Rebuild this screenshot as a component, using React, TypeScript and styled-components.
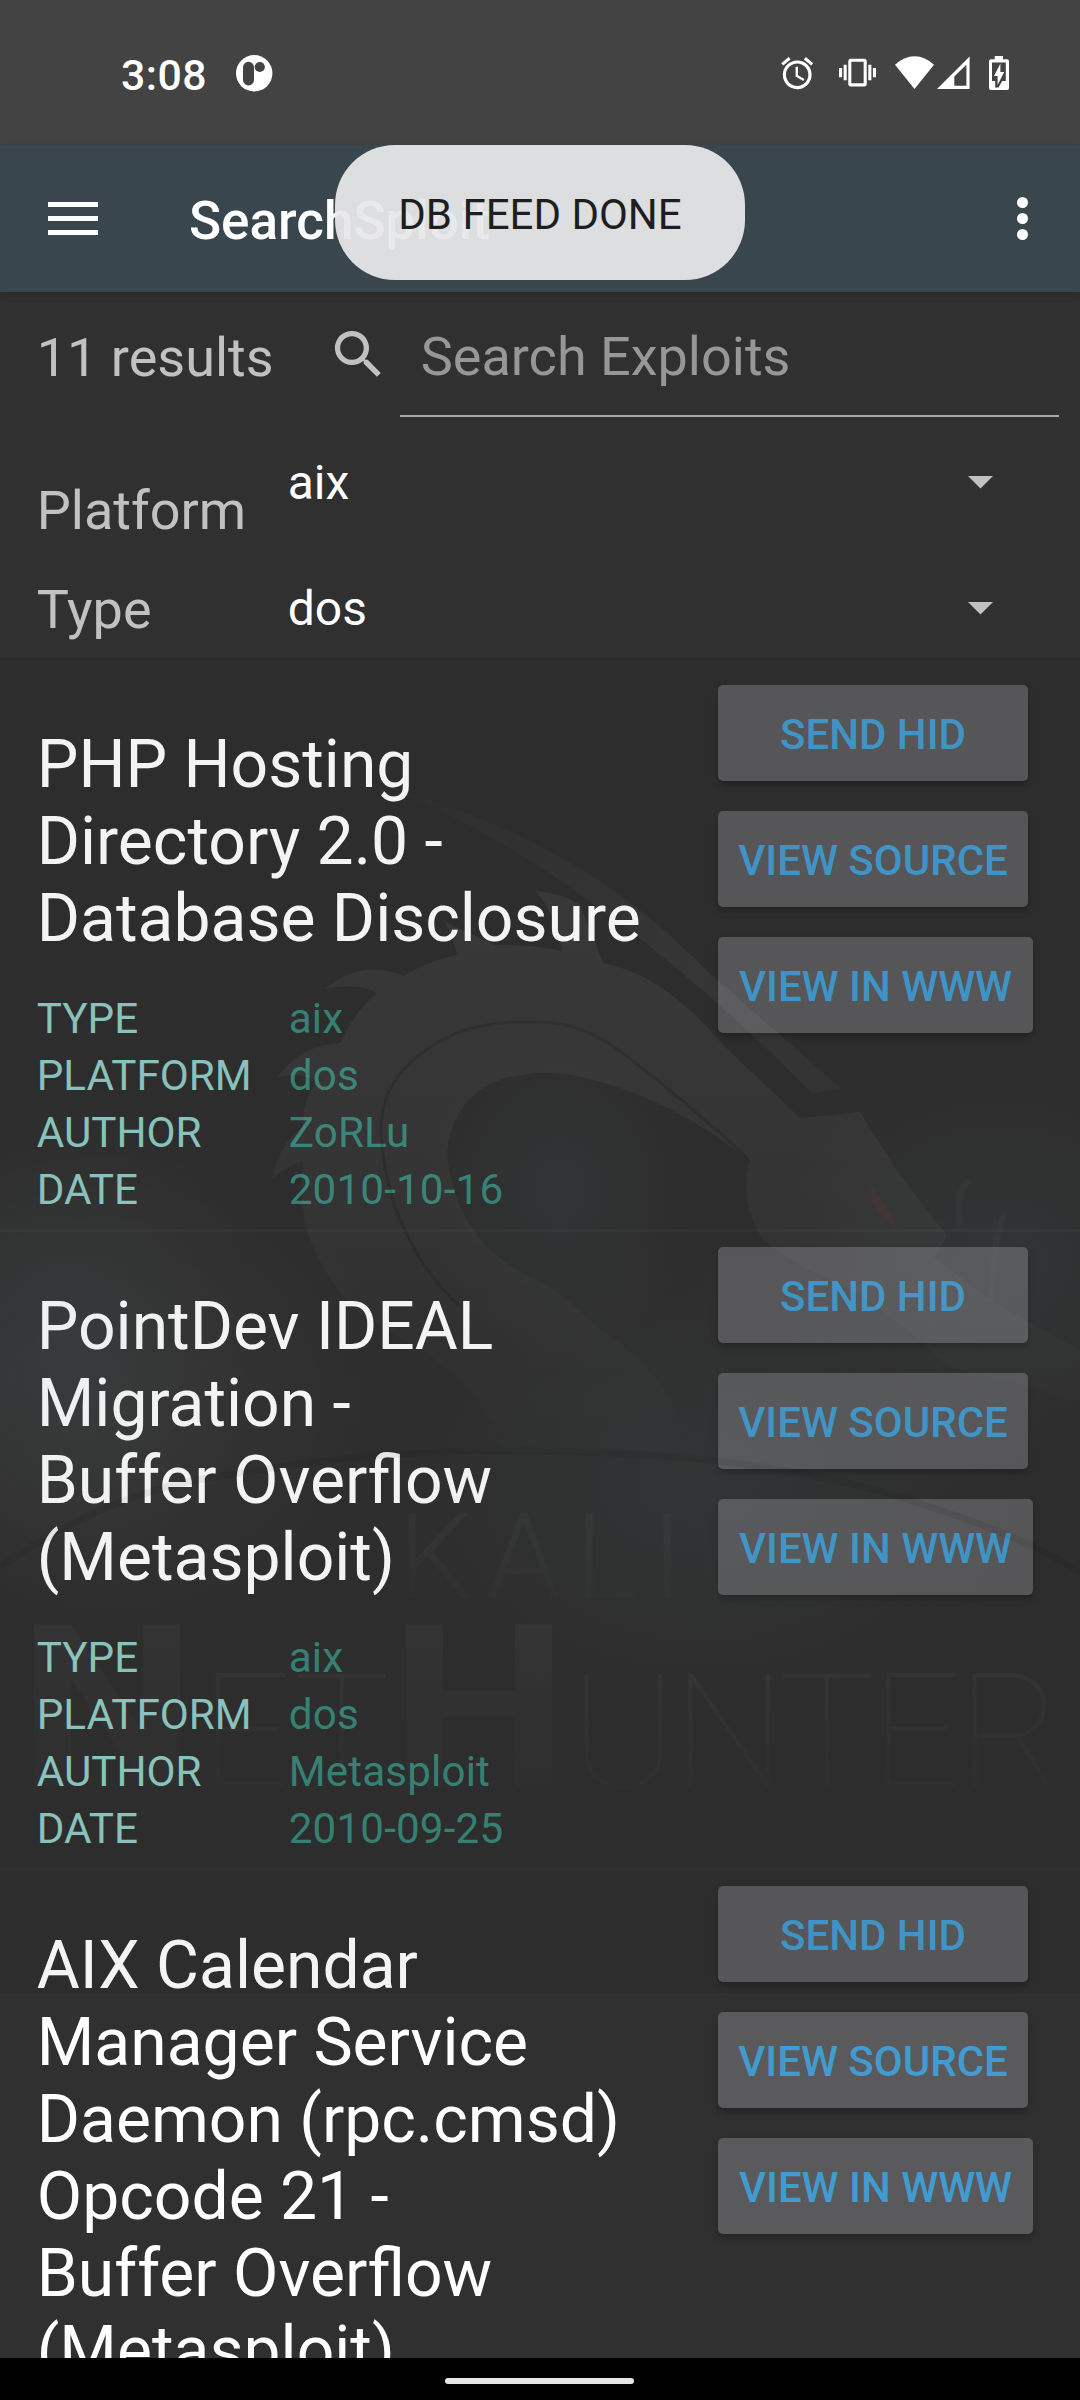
import React from "react";
import styled, { createGlobalStyle } from "styled-components";
import { MdAlarm, MdSearch, MdVibration } from "react-icons/md";

const GlobalStyle = createGlobalStyle`
  *, *::before, *::after { box-sizing: border-box; }
  html, body { margin: 0; padding: 0; background: #303030; }
  body { font-family: Roboto, "Noto Sans", sans-serif; }
`;

const Screen = styled.div`
  position: relative;
  display: flex;
  flex-direction: column;
  width: 1080px;
  height: 2400px;
  overflow: hidden;
  background: #303030;
  color: #fff;
`;

const StatusBar = styled.header`
  flex: none;
  display: flex;
  align-items: flex-start;
  height: 145px;
  padding: 54px 71px 0 121px;
  background: #434343;
`;

const Clock = styled.span`
  width: 115px;
  padding-top: 1px;
  font-size: 42.8px;
  line-height: 40px;
  font-weight: 500;
  letter-spacing: 0.4px;
`;

const StatusIcons = styled.div`
  display: flex;
  align-items: flex-start;
  margin-left: auto;
`;

const IconSlot = styled.span<{ $gap?: number }>`
  display: block;
  margin-left: ${(p) => p.$gap ?? 0}px;
  height: 39px;
  svg { display: block; }
`;

const Toolbar = styled.div`
  flex: none;
  position: relative;
  display: flex;
  align-items: center;
  height: 147px;
  padding: 0 52px 0 48px;
  background: #3a464d;
  box-shadow: 0 2px 8px rgba(0, 0, 0, 0.16);
`;

const MenuButton = styled.button`
  display: flex;
  flex-direction: column;
  gap: 9px;
  width: 50px;
  padding: 0;
  border: 0;
  background: none;
`;

const MenuBar = styled.span`
  height: 5.3px;
  background: #fff;
`;

const ToolbarTitle = styled.h1`
  margin: 5px 0 0 91px;
  font-size: 53px;
  line-height: 62px;
  font-weight: 500;
`;

const MoreButton = styled.button`
  display: flex;
  flex-direction: column;
  gap: 5px;
  margin-left: auto;
  padding: 0;
  border: 0;
  background: none;
`;

const MoreDot = styled.span`
  width: 11px;
  height: 11px;
  border-radius: 50%;
  background: #fff;
`;

const Toast = styled.div`
  position: absolute;
  top: 0;
  left: 335px;
  width: 410px;
  height: 135px;
  border-radius: 60px;
  background: rgba(232, 232, 234, 0.94);
  color: #1e1e1e;
  font-size: 42px;
  line-height: 139px;
  text-align: center;
  white-space: nowrap;
`;

const SearchRow = styled.div`
  flex: none;
  display: grid;
  grid-template-columns: 290px 73px 659px;
  height: 126px;
  padding-left: 36.75px;
  color: #c1c1c1;
`;

const ResultCount = styled.span`
  font-size: 54px;
  line-height: 131px;
`;

const SearchIcon = styled(MdSearch)`
  display: block;
  width: 63px;
  height: 63px;
  margin-top: 31px;
`;

const SearchField = styled.div`
  height: 125px;
  padding-left: 21px;
  border-bottom: 2px solid #a8a8a8;
  color: #979797;
  font-size: 54px;
  line-height: 130px;
`;

const FilterRow = styled.div`
  flex: none;
  display: grid;
  grid-template-columns: 251px 1fr 26px;
  align-items: center;
  height: 126px;
  padding: 0 86.5px 0 36.75px;
`;

const FilterLabel = styled.span<{ $drop: number }>`
  padding-top: ${(p) => p.$drop}px;
  color: #c1c1c1;
  font-size: 54px;
  line-height: 64px;
`;

const FilterValue = styled.span`
  padding-top: 4px;
  font-size: 48px;
  line-height: 60px;
`;

const Caret = styled.span`
  width: 26px;
  height: 13px;
  margin-top: 2px;
  background: #c1c1c1;
  clip-path: polygon(0 0, 100% 0, 50% 100%);
`;

const ResultList = styled.main`
  flex: 1;
  min-height: 0;
  overflow: hidden;
`;

const ResultItem = styled.article`
  display: grid;
  grid-template-columns: 681.25px auto;
  justify-content: start;
  padding: 0 0 11px 36.75px;
  border-bottom: 3px solid #353535;
`;

const ResultTitle = styled.h2`
  width: 650px;
  margin: 56px 0 33px;
  font-size: 66px;
  line-height: 77px;
  font-weight: 400;
  white-space: pre-line;
`;

const MetaList = styled.dl`
  display: grid;
  grid-template-columns: 252px 1fr;
  margin: 0;
  font-size: 42.2px;
  line-height: 57px;
`;

const MetaKey = styled.dt`
  color: #90cbc4;
`;

const MetaValue = styled.dd`
  margin: 0;
  color: #388679;
  letter-spacing: 0.15px;
`;

const Actions = styled.div`
  display: flex;
  flex-direction: column;
  align-items: flex-start;
  gap: 30px;
  padding-top: 15px;
`;

const ActionButton = styled.button<{ $wide?: boolean }>`
  width: ${(p) => (p.$wide ? 315 : 310)}px;
  height: 96px;
  padding: 2px 0 0;
  border: 0;
  border-radius: 5px;
  background: #5a5a5c;
  box-shadow: 0 4px 7px rgba(0, 0, 0, 0.26);
  color: #429bce;
  font-family: inherit;
  font-size: 42px;
  font-weight: 500;
  white-space: nowrap;
`;

const Watermark = styled.svg`
  position: absolute;
  top: 657px;
  left: 0;
  width: 1080px;
  height: 1336px;
  pointer-events: none;
`;

const NavBar = styled.footer`
  flex: none;
  display: flex;
  justify-content: center;
  align-items: flex-start;
  height: 42px;
  padding: 20px 1px 0 0;
  background: #000;
`;

const NavHandle = styled.span`
  width: 189px;
  height: 6px;
  border-radius: 3px;
  background: #e6e6e6;
`;

type Exploit = {
  title: string;
  type: string;
  platform: string;
  author: string;
  date: string;
};

const exploits: Exploit[] = [
  {
    title: "PHP Hosting Directory 2.0 -\nDatabase Disclosure",
    type: "aix",
    platform: "dos",
    author: "ZoRLu",
    date: "2010-10-16",
  },
  {
    title: "PointDev IDEAL Migration -\nBuffer Overflow (Metasploit)",
    type: "aix",
    platform: "dos",
    author: "Metasploit",
    date: "2010-09-25",
  },
  {
    title:
      "AIX Calendar Manager Service Daemon (rpc.cmsd) Opcode 21 -\nBuffer Overflow (Metasploit)",
    type: "aix",
    platform: "dos",
    author: "Metasploit",
    date: "2010-11-11",
  },
];

function NotificationIcon() {
  return (
    <svg width="38" height="38" viewBox="0 0 38 38">
      <circle cx="18.2" cy="19.3" r="18.2" fill="#fff" />
      <rect x="7" y="7.8" width="11" height="23.6" rx="5.4" fill="#434343" />
      <circle cx="23.8" cy="13" r="5.1" fill="#434343" />
    </svg>
  );
}

function WifiIcon() {
  return (
    <svg width="39" height="37" viewBox="0 0 39 37">
      <path d="M0 10.8Q8.8 2.2 19.5 2.2T39 10.8L19.5 35Z" fill="#fff" />
    </svg>
  );
}

function SignalIcon() {
  return (
    <svg width="33" height="37" viewBox="0 0 33 37">
      <path
        d="M0 35L32.6 2.5V35ZM17.3 31.8H29.4V10.8L17.3 22.6Z"
        fill="#fff"
        fillRule="evenodd"
      />
    </svg>
  );
}

function BatteryIcon() {
  return (
    <svg width="20" height="37" viewBox="0 0 20 37">
      <path
        d="M5.7 2H14V5.2H18Q20 5.2 20 7.2V34Q20 36 18 36H2Q0 36 0 34V7.2Q0 5.2 2 5.2H5.7Z"
        fill="#fff"
      />
      <path
        d="M3 8.5H16.8V27H13.2L9.5 33.6H6.2V27H3Z"
        fill="#434343"
      />
      <path d="M11.4 9.5V18H15.2L8.6 31V22H5Z" fill="#fff" />
    </svg>
  );
}

function DragonWatermark() {
  return (
    <Watermark viewBox="0 657 1080 1336" aria-hidden="true">
      <defs>
        <radialGradient id="mist">
          <stop offset="0" stopColor="#8a9cae" stopOpacity="0.06" />
          <stop offset="1" stopColor="#8a9cae" stopOpacity="0" />
        </radialGradient>
        <radialGradient id="glow">
          <stop offset="0" stopColor="#fff" stopOpacity="0.04" />
          <stop offset="1" stopColor="#fff" stopOpacity="0" />
        </radialGradient>
        <linearGradient id="scale" x1="0" y1="0" x2="0" y2="1">
          <stop offset="0" stopColor="#fff" stopOpacity="0.055" />
          <stop offset="0.5" stopColor="#fff" stopOpacity="0.035" />
          <stop offset="0.85" stopColor="#fff" stopOpacity="0.012" />
          <stop offset="1" stopColor="#fff" stopOpacity="0.004" />
        </linearGradient>
        <linearGradient id="streak" x1="0" y1="0" x2="1" y2="1">
          <stop offset="0" stopColor="#fff" stopOpacity="0.005" />
          <stop offset="0.7" stopColor="#fff" stopOpacity="0.045" />
          <stop offset="1" stopColor="#fff" stopOpacity="0.025" />
        </linearGradient>
        <linearGradient id="letter" x1="0" y1="0" x2="0" y2="1">
          <stop offset="0" stopColor="#fff" stopOpacity="0.035" />
          <stop offset="1" stopColor="#fff" stopOpacity="0.003" />
        </linearGradient>
      </defs>
      <rect x="0" y="657" width="1080" height="1336" fill="#000" opacity="0.045" />
      <ellipse cx="110" cy="1400" rx="300" ry="260" fill="url(#glow)" />
      <ellipse cx="60" cy="1340" rx="200" ry="260" fill="url(#mist)" />
      <ellipse cx="560" cy="1190" rx="140" ry="170" fill="url(#mist)" />
      <ellipse cx="1000" cy="1260" rx="240" ry="210" fill="url(#mist)" />
      <ellipse cx="700" cy="1480" rx="340" ry="250" fill="url(#mist)" />
      <path
        d="M380 784C520 825 620 880 708 972L842 1089L812 1093C720 1000 640 935 560 880Q480 825 380 784Z"
        fill="url(#streak)"
      />
      <path
        d="M603 963Q592 935 580 905Q562 893 536 891Q556 915 562 951Q530 944 495 945L445 922Q455 940 457 955Q425 962 404 976Q364 958 324 989Q358 982 377 993Q352 1015 341 1043Q300 1045 277 1077Q300 1072 317 1081Q303 1100 303 1127Q278 1145 272 1180Q286 1165 303 1161Q298 1200 308 1234Q325 1280 358 1312C420 1350 480 1375 506 1453L689 1453Q670 1370 598 1328Q575 1305 549 1286Q510 1270 484 1244Q450 1205 447 1150Q455 1095 500 1080Q545 1065 598 1081Q670 1100 750 1160Q738 1200 763 1240Q800 1270 847 1286Q900 1320 947 1366L1080 1400V1350L991 1301L934 1257L947 1236L897 1171L860 1112L800 1118L723 1045Q665 975 603 963Z"
        fill="url(#scale)"
      />
      <path
        d="M748 1158Q690 1105 623 1053Q582 1022 539 1022Q500 1020 464 1030Q420 1048 399 1075Q377 1105 382 1144Q386 1190 404 1228Q425 1275 459 1305"
        fill="none"
        stroke="#000"
        strokeOpacity="0.12"
        strokeWidth="3"
      />
      <path d="M870 1186Q870 1212 897 1228Q885 1200 870 1186Z" fill="#ff3020" opacity="0.055" />
      <path
        d="M991 1301Q995 1230 1005 1212M960 1225Q955 1190 970 1180"
        fill="none"
        stroke="#fff"
        strokeOpacity="0.022"
        strokeWidth="6"
      />
      <path
        d="M0 1567Q110 1490 227 1475Q370 1450 506 1451Q620 1450 716 1461Q840 1475 930 1507Q1020 1535 1080 1572"
        fill="none"
        stroke="#000"
        strokeOpacity="0.06"
        strokeWidth="7"
      />
      <g fontFamily="Roboto, sans-serif" fill="url(#letter)">
        <text x="398" y="1598" fontSize="118" fontWeight="300" textLength="285" lengthAdjust="spacing">
          KALI
        </text>
        <text x="18" y="1787" fontSize="228" fontWeight="700" textLength="178" lengthAdjust="spacingAndGlyphs">
          N
        </text>
        <text x="200" y="1787" fontSize="160" fontWeight="100" textLength="190" lengthAdjust="spacingAndGlyphs">
          ET
        </text>
        <text x="390" y="1787" fontSize="228" fontWeight="700" textLength="178" lengthAdjust="spacingAndGlyphs">
          H
        </text>
        <text x="570" y="1787" fontSize="160" fontWeight="100" textLength="492" lengthAdjust="spacing">
          UNTER
        </text>
      </g>
    </Watermark>
  );
}

function ExploitCard({ exploit }: { exploit: Exploit }) {
  return (
    <ResultItem>
      <div>
        <ResultTitle>{exploit.title}</ResultTitle>
        <MetaList>
          <MetaKey>TYPE</MetaKey>
          <MetaValue>{exploit.type}</MetaValue>
          <MetaKey>PLATFORM</MetaKey>
          <MetaValue>{exploit.platform}</MetaValue>
          <MetaKey>AUTHOR</MetaKey>
          <MetaValue>{exploit.author}</MetaValue>
          <MetaKey>DATE</MetaKey>
          <MetaValue>{exploit.date}</MetaValue>
        </MetaList>
      </div>
      <Actions>
        <ActionButton>SEND HID</ActionButton>
        <ActionButton>VIEW SOURCE</ActionButton>
        <ActionButton $wide>VIEW IN WWW</ActionButton>
      </Actions>
    </ResultItem>
  );
}

export default function App() {
  return (
    <>
      <GlobalStyle />
      <Screen>
        <StatusBar>
          <Clock>3:08</Clock>
          <NotificationIcon />
          <StatusIcons>
            <IconSlot><MdAlarm size={38.4} /></IconSlot>
            <IconSlot $gap={22}><MdVibration size={37} /></IconSlot>
            <IconSlot $gap={19}><WifiIcon /></IconSlot>
            <IconSlot $gap={3.5}><SignalIcon /></IconSlot>
            <IconSlot $gap={19}><BatteryIcon /></IconSlot>
          </StatusIcons>
        </StatusBar>
        <Toolbar>
          <MenuButton aria-label="Menu">
            <MenuBar />
            <MenuBar />
            <MenuBar />
          </MenuButton>
          <ToolbarTitle>SearchSploit</ToolbarTitle>
          <MoreButton aria-label="More">
            <MoreDot />
            <MoreDot />
            <MoreDot />
          </MoreButton>
          <Toast>DB FEED DONE</Toast>
        </Toolbar>
        <SearchRow>
          <ResultCount>11 results</ResultCount>
          <SearchIcon />
          <SearchField>Search Exploits</SearchField>
        </SearchRow>
        <FilterRow>
          <FilterLabel $drop={59}>Platform</FilterLabel>
          <FilterValue>aix</FilterValue>
          <Caret />
        </FilterRow>
        <FilterRow>
          <FilterLabel $drop={5}>Type</FilterLabel>
          <FilterValue>dos</FilterValue>
          <Caret />
        </FilterRow>
        <ResultList>
          {exploits.map((exploit) => (
            <ExploitCard key={exploit.title} exploit={exploit} />
          ))}
        </ResultList>
        <DragonWatermark />
        <NavBar>
          <NavHandle />
        </NavBar>
      </Screen>
    </>
  );
}
